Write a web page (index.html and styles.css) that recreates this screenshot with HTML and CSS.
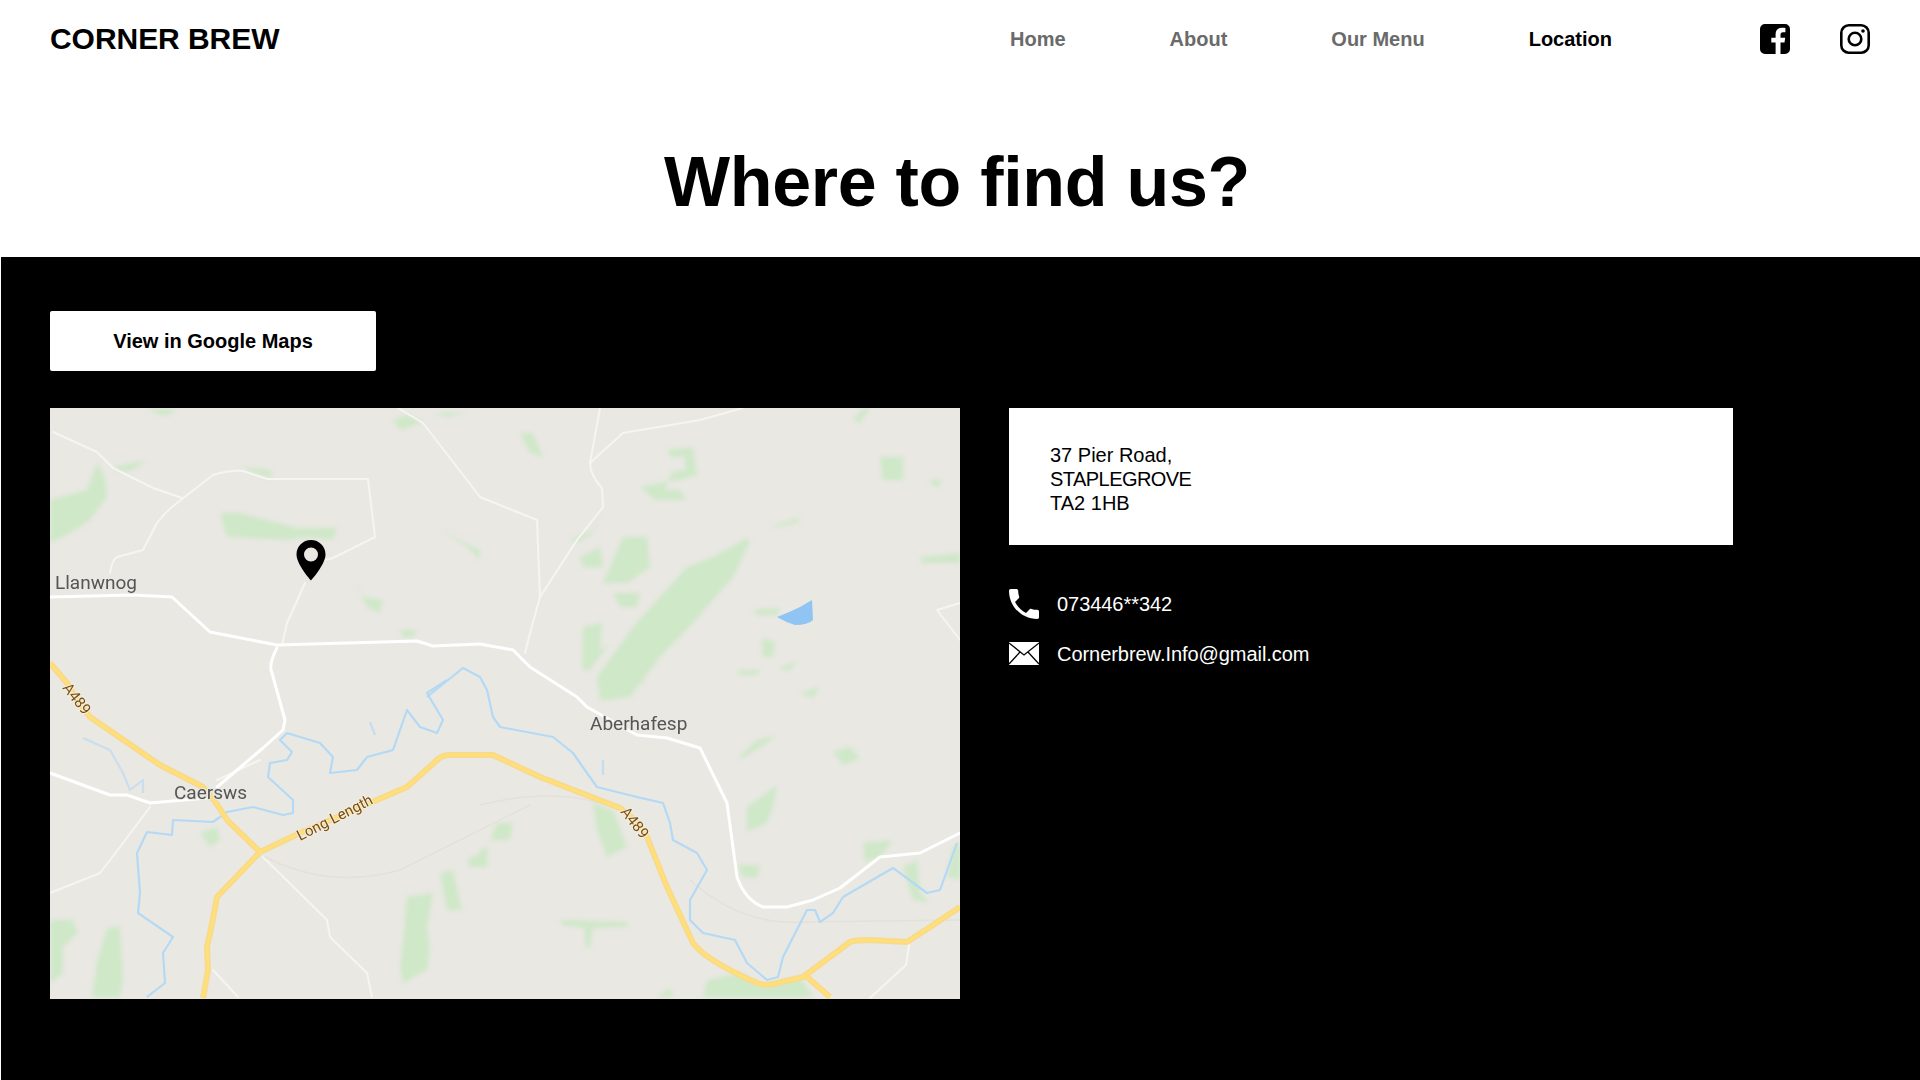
FILE: index.html
```html
<!DOCTYPE html>
<html lang="en">
<head>
    <meta charset="UTF-8">
    <meta name="viewport" content="width=device-width, initial-scale=1.0">
    <title>Corner Brew - Location</title>
    <link rel="stylesheet" href="styles.css">
</head>
<body>

    <header class="topbar">
        <div class="logo">CORNER BREW</div>
        <nav class="nav">
            <a href="#">Home</a>
            <a href="#">About</a>
            <a href="#">Our Menu</a>
            <a href="#" class="active">Location</a>
        </nav>
        <div class="social">
            <svg width="30" height="30" viewBox="0 0 30 30">
                <path fill-rule="evenodd" d="M5 0h20a5 5 0 0 1 5 5v20a5 5 0 0 1-5 5h-4.500v-11.500h4l.7-4.800h-4.700v-3c0-1.500.7-2.400 2.500-2.400h2.400v-4.300c-1-.1-2.200-.3-3.500-.3-3.700 0-6.300 2.200-6.300 6.300v3.700h-4.300v4.800h4.300v11.500h-10.600a5 5 0 0 1-5-5v-20a5 5 0 0 1 5-5z"/>
            </svg>
            <svg width="30" height="30" viewBox="0 0 30 30" fill="none" stroke="#000">
                <rect x="1.300" y="1.300" width="27.400" height="27.400" rx="7.500" stroke-width="2.600"/>
                <circle cx="15" cy="15" r="6.300" stroke-width="2.600"/>
                <circle cx="23" cy="7" r="1.800" fill="#000" stroke="none"/>
            </svg>
        </div>
    </header>

    <h1 class="title">Where to find us?</h1>

    <section class="location">
        <a href="#" class="maps-btn">View in Google Maps</a>

        <div class="location-row">
            <!-- map drawn in page coordinates so it was easier to trace -->
            <svg class="map" width="910" height="591" viewBox="50 408 910 591">
                <defs>
                    <filter id="soft" x="-20%" y="-20%" width="140%" height="140%"><feGaussianBlur stdDeviation="2.200"/></filter>
                    <filter id="softer" x="-5%" y="-5%" width="110%" height="110%"><feGaussianBlur stdDeviation="0.700"/></filter>
                    <g id="yellow-roads">
                        <path d="M50 663L67 683Q76 700 90 717L160 765L203 787Q215 800 227 820L260 852"/>
                        <path d="M260 852L300 833L407 787L435 762Q441 755 450 755L493 755L540 777L620 808Q637 820 647 837L667 887L693 943Q705 960 757 983Q765 986 773 984L803 977L850 942Q855 940 870 940L907 942L930 927L960 907"/>
                        <path d="M807 977L830 997"/>
                        <path d="M260 852L217 897Q212 925 207 947L208 970L203 998"/>
                    </g>
                </defs>
                <rect x="50" y="408" width="910" height="591" fill="#e9e8e3"/>

                <g fill="#cfe8c8" filter="url(#soft)">
                    <path d="M50 500L87 490L97 463L105 477L107 497L90 520L63 537L50 543Z"/>
                    <path d="M113 467L147 460L133 470L120 472Z"/>
                    <path d="M147 408L177 410L170 415L160 415Z"/>
                    <path d="M220 513L240 513L297 528L337 528L333 540L307 537L287 540L227 537Z"/>
                    <path d="M240 467L270 470L273 478L260 475Z"/>
                    <path d="M393 420L407 415L423 422L400 430Z"/>
                    <path d="M432 413L467 413L447 417Z"/>
                    <path d="M440 530L480 550L480 560L467 547Z"/>
                    <path d="M352 577L363 597L383 600L380 613L367 607Z"/>
                    <path d="M400 630L417 630L413 637L403 637Z"/>
                    <path d="M600 700L597 677L633 627L687 567L713 557L747 538L750 542L733 577L693 623L660 657L630 697Z"/>
                    <path d="M667 450L693 447L697 475L680 480L665 482L640 487L655 500L687 500L680 490L665 490L672 472L685 470L685 456L672 458Z"/>
                    <path d="M623 537L647 537L650 567L627 583L603 583Z"/>
                    <path d="M580 557L600 547L603 567L583 567Z"/>
                    <path d="M613 593L640 593L637 607L620 607Z"/>
                    <path d="M583 627L602 623L600 650L610 643L590 670L582 670Z"/>
                    <path d="M880 457L903 457L903 480L883 480Z"/>
                    <path d="M770 527L800 517L797 523L777 527Z"/>
                    <path d="M928 480L943 480L937 488Z"/>
                    <path d="M920 557L960 553L960 563L923 563Z"/>
                    <path d="M753 610L780 608L777 615L757 615Z"/>
                    <path d="M762 638L775 642L773 657L763 657Z"/>
                    <path d="M737 670L760 670L757 675L740 675Z"/>
                    <path d="M780 667L797 662L790 670L782 670Z"/>
                    <path d="M800 693L820 687L813 698Z"/>
                    <path d="M520 433L533 433L543 457L530 453Z"/>
                    <path d="M853 420L863 408L870 408L860 423Z"/>
                    <path d="M570 540L593 530L603 510L593 533L577 543Z"/>
                    <path d="M738 758L757 740L775 735L767 743L743 758Z"/>
                    <path d="M833 752L850 747L860 758L843 765Z"/>
                    <path d="M747 807L777 785L773 807L767 823L747 832Z"/>
                    <path d="M863 843L893 840L880 857L865 862Z"/>
                    <path d="M737 865L760 865L757 878L743 877Z"/>
                    <path d="M903 867L917 860L920 893L930 903L913 900Z"/>
                    <path d="M953 847L960 843L960 880L947 877Z"/>
                    <path d="M600 680L647 680L613 700L603 700Z"/>
                    <path d="M593 803L613 810L627 847L607 857L597 830Z"/>
                    <path d="M497 823L513 823L510 840L490 840Z"/>
                    <path d="M480 850L488 847L487 867L480 867Z"/>
                    <path d="M560 920L627 922L627 927L593 928L590 947L585 947L585 928L562 925Z"/>
                    <path d="M707 980L740 973L763 987L800 977L813 997L703 997Z"/>
                    <path d="M657 997L670 988L673 997Z"/>
                    <path d="M50 920L73 920L78 933L63 947L63 973L50 983Z"/>
                    <path d="M107 928L120 927L123 980L120 997L92 997L97 963Z"/>
                    <path d="M200 833L217 827L220 840L210 847Z"/>
                    <path d="M407 897L433 893L427 927L430 947L427 970L403 983L400 967L403 943Z"/>
                    <path d="M440 873L453 870L462 910L447 910Z"/>
                    <path d="M467 860L480 853L480 867L470 867Z"/>
                </g>

                <g fill="none" stroke-linejoin="round" stroke-linecap="round" filter="url(#softer)">
                    <g stroke="#f6f5f1" stroke-width="2">
                        <path d="M53 432L97 452L113 468L153 488L182 498"/>
                        <path d="M110 573Q112 560 117 557L143 550L157 523Q165 512 177 503L213 475Q230 470 243 471L267 479L368 479L375 537L333 558L325 560"/>
                        <path d="M305 583L287 623L282 645"/>
                        <path d="M600 408L590 463Q590 475 602 488L603 507L577 540L540 597L530 633L525 653"/>
                        <path d="M590 463L623 433L700 420L743 408"/>
                        <path d="M480 497L537 520L540 597"/>
                        <path d="M398 408L423 423L480 497"/>
                        <path d="M960 603L937 610L960 640"/>
                        <path d="M150 807L120 847L100 873L50 893"/>
                        <path d="M263 857L327 920L330 937L367 973L372 997"/>
                        <path d="M213 970L238 997"/>
                        <path d="M260 760L217 780"/>
                        <path d="M909 945L906 965L870 998"/>
                    </g>
                    <g stroke="#e2e1dc" stroke-width="1.500">
                        <path d="M265 857Q330 890 400 870Q440 850 530 805"/>
                        <path d="M480 805Q560 785 620 810M690 880Q740 925 800 922L960 920"/>
                    </g>
                    <g stroke="#fff" stroke-width="3">
                        <path d="M50 597L133 595L172 597L210 632L277 645L417 641L433 646L480 644L513 650L530 667L577 697L587 707L637 735L667 738L700 748L727 803L737 877Q745 900 763 907L787 907L813 900L840 888L880 857L920 853L960 833"/>
                        <path d="M277 648Q268 665 272 673L285 720L283 730L263 748L217 787"/>
                        <path d="M50 773L110 795L127 795L150 803L207 798"/>
                    </g>
                </g>

                <g fill="none" stroke="#b4d9f5" stroke-width="2.200" stroke-linejoin="round" filter="url(#softer)">
                    <path d="M427 697L463 668L480 677L487 690L493 717L500 727L553 737L573 753L587 773L597 787L637 797L663 803L670 823L673 840L697 853L707 870L690 900L690 920L703 933L735 940L747 963L767 980L778 977L783 957L807 910L815 910L820 922L833 913L843 897L893 868L927 893L940 890L957 843"/>
                    <path d="M447 680L427 693L443 720L437 733L420 727L407 710L393 750L367 757L357 770L330 773L333 757L320 743L287 733L280 740L292 752L287 760L270 763L268 777L293 800L293 813L283 815L253 807L227 812L213 822L173 820L172 835L147 832L137 853L140 893L138 913L173 937L163 953L165 983L147 997"/>
                    <path d="M83 738L110 750L123 773L130 790L143 780L143 793" opacity="0.6"/>
                    <path d="M603 760L603 775M370 722L375 735" opacity="0.7"/>
                </g>
                <path d="M777 617Q790 612 800 607L812 600L813 620Q808 625 795 625Q785 622 777 617Z" fill="#8fc4f3" filter="url(#softer)"/>

                <g fill="none" stroke-linejoin="round" filter="url(#softer)">
                    <use href="#yellow-roads" stroke="#f8d98d" stroke-width="6"/>
                    <use href="#yellow-roads" stroke="#fedf78" stroke-width="3"/>
                </g>

                <g class="map-place">
                    <text x="55" y="589">Llanwnog</text>
                    <text x="174" y="799">Caersws</text>
                    <text x="590" y="730">Aberhafesp</text>
                </g>
                <g class="map-road">
                    <text transform="translate(62 688) rotate(52)">A489</text>
                    <text transform="translate(300 841) rotate(-27)">Long Length</text>
                    <text transform="translate(620 812) rotate(52)">A489</text>
                </g>

                <path fill-rule="evenodd" d="M311 540c-8 0-14.500 6.300-14.500 14.500 0 10 14.500 26 14.500 26s14.500-16 14.500-26c0-8.200-6.500-14.500-14.500-14.500zm0 7.500a7 7 0 1 1 0 14 7 7 0 0 1 0-14z"/>
            </svg>

            <div class="contact">
                <div class="address">
                    37 Pier Road,<br>
                    <span class="address-town">STAPLEGROVE</span><br>
                    TA2 1HB
                </div>
                <div class="contact-line">
                    <svg width="30" height="30" viewBox="3 3 18 18" fill="#fff">
                        <path d="M6.620 10.790c1.440 2.830 3.760 5.140 6.590 6.590l2.200-2.200c.27-.27.67-.36 1.020-.24 1.120.37 2.330.57 3.570.57.55 0 1 .45 1 1V20c0 .55-.45 1-1 1-9.390 0-17-7.610-17-17 0-.55.45-1 1-1h3.500c.55 0 1 .45 1 1 0 1.250.2 2.450.57 3.570.11.35.03.74-.25 1.020l-2.200 2.200z"/>
                    </svg>
                    <span>073446**342</span>
                </div>
                <div class="contact-line">
                    <svg width="30" height="24" viewBox="0 0 30 24">
                        <rect width="30" height="23" fill="#fff"/>
                        <path d="M0 1L15 13L30 1M0 22L11 10M30 22L19 10" fill="none" stroke="#000" stroke-width="1.300"/>
                    </svg>
                    <span>Cornerbrew.Info@gmail.com</span>
                </div>
            </div>
        </div>
    </section>

</body>
</html>
```

FILE: styles.css
```css
* {
    margin: 0;
    padding: 0;
    box-sizing: border-box;
}
body {
    font-family: "Liberation Sans", Arial, sans-serif;
    background-color: white;
    color: black;
    height: 1080px;
    overflow: hidden;
    display: flex;
    flex-direction: column;
}
a {
    text-decoration: none;
    color: inherit;
}
.topbar {
    height: 77px;
    flex-shrink: 0;
    padding: 0 50px;
    display: flex;
    align-items: center;
}
.logo {
    font-size: 30px;
    font-weight: bold;
    letter-spacing: -0.05px;
    width: 960px;
}
.nav {
    display: flex;
    gap: 104px;
    padding-top: 2px;
    font-size: 20px;
    font-weight: bold;
    color: #6a6a6a;
}
.nav .active {
    color: black;
}
.social {
    margin-left: auto;
    display: flex;
    gap: 50px;
}
.title {
    height: 180px;
    flex-shrink: 0;
    padding-top: 62px;
    font-size: 70px;
    line-height: 86px;
    font-weight: bold;
    letter-spacing: -0.3px;
    text-align: center;
    margin-left: -6px;
}
.location {
    flex: 1;
    margin-left: 1px;
    padding: 54px 49px 0;
    background-color: black;
    color: white;
}
.maps-btn {
    display: flex;
    align-items: center;
    justify-content: center;
    width: 326px;
    height: 60px;
    border-radius: 2px;
    background-color: white;
    color: black;
    font-size: 20px;
    font-weight: bold;
}
.location-row {
    display: flex;
    gap: 49px;
    margin-top: 37px;
}
.map {
    display: block;
    flex-shrink: 0;
}
.map-place text {
    font-family: Roboto, sans-serif;
    font-size: 19px;
    fill: #555;
    stroke: #e9e8e3;
    stroke-width: 2px;
    paint-order: stroke;
}
.map-road text {
    font-family: Roboto, sans-serif;
    font-size: 15px;
    fill: #7a4d12;
    stroke: #f3eedd;
    stroke-width: 2px;
    paint-order: stroke;
}
.contact {
    width: 724px;
}
.address {
    height: 137px;
    padding: 35px 41px 0;
    background-color: white;
    color: black;
    font-size: 20px;
    line-height: 24px;
}
.address-town {
    letter-spacing: -0.55px;
}
.contact-line {
    display: flex;
    align-items: center;
    gap: 18px;
    height: 30px;
    font-size: 20px;
    letter-spacing: -0.05px;
}
.address + .contact-line {
    margin-top: 44px;
}
.contact-line + .contact-line {
    margin-top: 20px;
}
```
